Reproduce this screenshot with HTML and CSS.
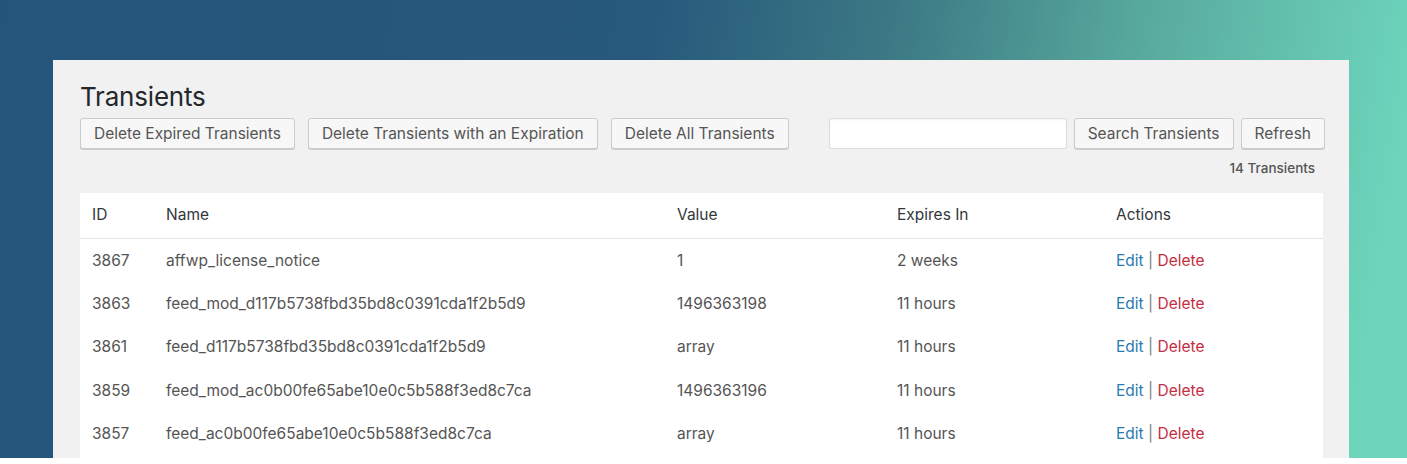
FILE: index.html
```html
<!DOCTYPE html>
<html lang="en">
<head>
<meta charset="utf-8">
<title>Transients</title>
<link rel="stylesheet" href="styles.css">
</head>
<body>
<div class="stage">
  <div class="panel">
    <h1 class="title">Transients</h1>
    <div class="toolbar">
      <div class="group">
        <button class="btn">Delete Expired Transients</button>
        <button class="btn">Delete Transients with an Expiration</button>
        <button class="btn">Delete All Transients</button>
      </div>
      <div class="search">
        <input class="search-input" type="text">
        <button class="btn">Search Transients</button>
        <button class="btn">Refresh</button>
      </div>
    </div>
    <div class="count">14 Transients</div>
    <div class="table-wrap">
      <table class="list">
        <colgroup>
          <col class="c-id"><col class="c-name"><col class="c-value"><col class="c-exp"><col>
        </colgroup>
        <thead>
          <tr><th>ID</th><th>Name</th><th>Value</th><th>Expires In</th><th>Actions</th></tr>
        </thead>
        <tbody>
          <tr><td>3867</td><td>affwp_license_notice</td><td>1</td><td>2 weeks</td><td><a class="edit" href="#">Edit</a> <span class="sep">|</span> <a class="del" href="#">Delete</a></td></tr>
          <tr><td>3863</td><td>feed_mod_d117b5738fbd35bd8c0391cda1f2b5d9</td><td>1496363198</td><td>11 hours</td><td><a class="edit" href="#">Edit</a> <span class="sep">|</span> <a class="del" href="#">Delete</a></td></tr>
          <tr><td>3861</td><td>feed_d117b5738fbd35bd8c0391cda1f2b5d9</td><td>array</td><td>11 hours</td><td><a class="edit" href="#">Edit</a> <span class="sep">|</span> <a class="del" href="#">Delete</a></td></tr>
          <tr><td>3859</td><td>feed_mod_ac0b00fe65abe10e0c5b588f3ed8c7ca</td><td>1496363196</td><td>11 hours</td><td><a class="edit" href="#">Edit</a> <span class="sep">|</span> <a class="del" href="#">Delete</a></td></tr>
          <tr><td>3857</td><td>feed_ac0b00fe65abe10e0c5b588f3ed8c7ca</td><td>array</td><td>11 hours</td><td><a class="edit" href="#">Edit</a> <span class="sep">|</span> <a class="del" href="#">Delete</a></td></tr>
        </tbody>
      </table>
    </div>
  </div>
</div>
</body>
</html>
```

FILE: styles.css
```css
* { box-sizing: border-box; }
html, body { margin: 0; padding: 0; background: #ffffff; }
body { font-family: Inter, "Liberation Sans", sans-serif; }

.stage {
  height: 458px;
  overflow: hidden;
  padding: 60px 0 0 53px;
  background: linear-gradient(100deg, #25557a 0%, #27597c 44%, #3b7884 60%, #58a99d 77%, #6dd5bc 96%);
}

.panel {
  width: 1296px;
  height: 398px;
  overflow: hidden;
  background: #f1f1f1;
  padding: 21px 26px 0 27px;
  display: flex;
  flex-direction: column;
}

.title {
  margin: 0;
  font-size: 26px;
  font-weight: 400;
  line-height: 32px;
  color: #23282d;
  letter-spacing: -0.2px;
}

.toolbar {
  display: flex;
  justify-content: space-between;
  margin-top: 5px;
}
.group, .search { display: flex; }
.group { gap: 13px; }
.search { gap: 7px; margin-right: -2px; }

.btn {
  height: 31px;
  padding: 0 13px;
  font-family: Inter, "Liberation Sans", sans-serif;
  font-size: 15.5px;
  color: #555;
  background: #f7f7f7;
  border: 1px solid #cccccc;
  border-radius: 3px;
  box-shadow: 0 1px 0 #cccccc;
}

.search-input {
  width: 238px;
  height: 31px;
  border: 1px solid #dddddd;
  border-radius: 2px;
  background: #ffffff;
  box-shadow: inset 0 1px 2px rgba(0,0,0,0.05);
}

.count {
  text-align: right;
  font-size: 13.5px;
  font-weight: 500;
  color: #555;
  line-height: 18px;
  padding-right: 8px;
  margin-top: 10px;
}

.table-wrap {
  flex: 1;
  margin-top: 16px;
  background: #ffffff;
}

.list {
  width: 1243px;
  border-collapse: collapse;
  table-layout: fixed;
}
.c-id { width: 74px; }
.c-name { width: 511px; }
.c-value { width: 220px; }
.c-exp { width: 219px; }

.list th, .list td {
  text-align: left;
  padding: 0 0 0 12px;
  font-size: 15.5px;
  white-space: nowrap;
}
.list th {
  height: 45px;
  padding-bottom: 2px;
  font-weight: 400;
  color: #32373c;
  border-bottom: 1px solid #e5e5e5;
}
.list td {
  height: 43.4px;
  padding-top: 1px;
  color: #555;
}
.edit { color: #2a7ab0; text-decoration: none; }
.del { color: #c62d3f; text-decoration: none; }
.sep { color: #808080; }
```
